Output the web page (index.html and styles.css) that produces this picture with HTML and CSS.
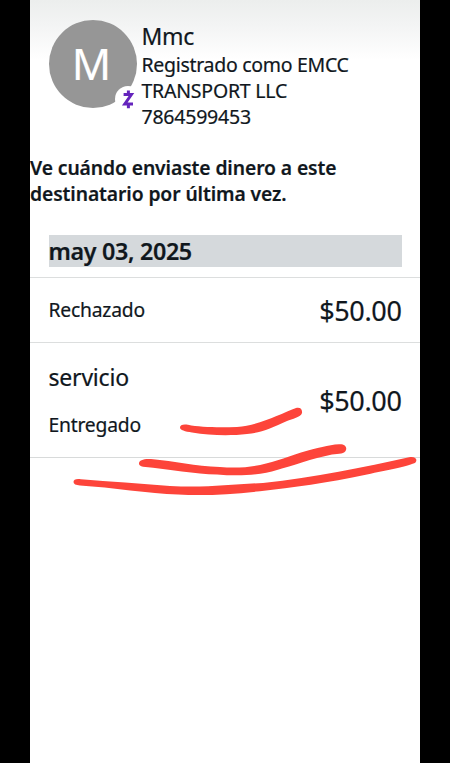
FILE: index.html
```
<!DOCTYPE html>
<html lang="es">
<head>
<meta charset="utf-8">
<title>Historial</title>
<link rel="stylesheet" href="styles.css">
</head>
<body>
<main class="screen">
  <header class="contact">
    <div class="avatar"><span class="initial">M</span>
      <svg class="badge" viewBox="0 0 26 26" width="26" height="26">
        <circle cx="13" cy="13" r="13" fill="#fff"/>
        <path d="M8.600 8.500H16.400L9.800 18H18M13.400 4.500V8.500M13.400 18V22.300" fill="none" stroke="#6524bd" stroke-width="3"/>
      </svg>
    </div>
    <div class="details">
      <div class="name">Mmc</div>
      <div class="info"><span class="registered">Registrado como EMCC</span><br>TRANSPORT LLC<br>7864599453</div>
    </div>
  </header>
  <h2 class="intro">Ve cuándo enviaste dinero a este<br>destinatario por última vez.</h2>
  <h3 class="date">may 03, 2025</h3>
  <section class="row rejected">
    <div class="status">Rechazado</div>
    <div class="amount">$50.00</div>
  </section>
  <section class="row delivered">
    <div class="labels">
      <div class="memo">servicio</div>
      <div class="status">Entregado</div>
    </div>
    <div class="amount">$50.00</div>
  </section>
  <svg class="marks" viewBox="0 0 390 110" width="390" height="110">
    <path d="M150 32.500C150 30 153 29 158 29.800C170 32.500 190 32.500 207 32C230 30 250 19 266 13C270 12 272.500 14 272 18C271 22 262 24 257 26C242 33 230 38 217 39C200 41 180 40.500 162 37.500C155 36.500 150 35 150 32.500Z"/>
    <path d="M109 68.500C109 65 114 63.500 121 64C145 66 165 71.500 190 72C225 75 245 66 271 57.500C288 53 298 50 309 49.300C315 49 317 52 316 55C315 59 309 58.500 302 59.500C282 63.500 262 71 247 75C232 80 210 81.500 187 79.500C165 79.500 140 74 113 71.800Q109 71 109 68.500Z"/>
    <path d="M43.500 87C43.500 84.500 46 83.500 51 84.200C80 86.500 110 88.500 140 91C175 93 202 89.500 233 88C285 82.500 334 72 379 62.200C385 61 388 64 385.500 67.500C380 71 357 75 337 79.500C297 88 263 92.500 230 96.200C200 99.500 174 101 148 99.500C119 98.500 82 92.500 50 90.500Q43.500 90 43.500 87Z"/>
  </svg>
</main>
</body>
</html>
```
FILE: styles.css
```
* { box-sizing: border-box; }
body {
  margin: 0;
  background: #000;
  color: #10171d;
  font-family: "Noto Sans", sans-serif;
  -webkit-text-stroke: 0.2px currentColor;
}
.screen {
  position: relative;
  width: 390px;
  height: 763px;
  margin: 0 auto;
  overflow: hidden;
  background: linear-gradient(#eceeed 0, #f3f4f4 25px, #fff 60px);
}
.contact { display: flex; height: 155px; padding: 19.500px 0 0 18.500px; }
.avatar {
  position: relative;
  width: 88px;
  height: 88px;
  border-radius: 50%;
  background: #969696;
  color: #fff;
  font-size: 43.500px;
  line-height: 86px;
  text-align: center;
}
.initial { position: relative; left: -1px; }
.badge { position: absolute; left: 66.500px; top: 66.500px; }
.details { padding-left: 5px; white-space: nowrap; }
.name { height: 32px; padding-top: 1px; font-size: 23px; line-height: 31px; letter-spacing: -0.3px; }
.info { padding-top: 0.500px; font-size: 19.500px; line-height: 26px; letter-spacing: -0.220px; }
.registered { letter-spacing: -0.300px; }
.intro {
  height: 80px;
  margin: 0;
  font-size: 19.300px;
  font-weight: 600;
  line-height: 25.500px;
  letter-spacing: -0.090px;
  white-space: nowrap;
}
.date {
  height: 31.500px;
  margin: 0 18.500px 10.500px;
  background: #d5d9dc;
  font-size: 23.300px;
  font-weight: 600;
  line-height: 32.500px;
  letter-spacing: -0.330px;
}
.row {
  display: flex;
  justify-content: space-between;
  align-items: center;
  padding: 0 18.500px;
  border-top: 1px solid #dcdede;
}
.rejected { height: 65px; }
.delivered { height: 116px; border-bottom: 1px solid #d8dada; }
.status { font-size: 19.300px; line-height: 26px; letter-spacing: -0.200px; }
.memo { margin-bottom: 20px; font-size: 23px; line-height: 29px; letter-spacing: -0.200px; }
.amount { padding-top: 1px; font-size: 27px; line-height: 36px; letter-spacing: -0.350px; }
.marks { position: absolute; left: 0; top: 395px; fill: #fd443a; }
```
